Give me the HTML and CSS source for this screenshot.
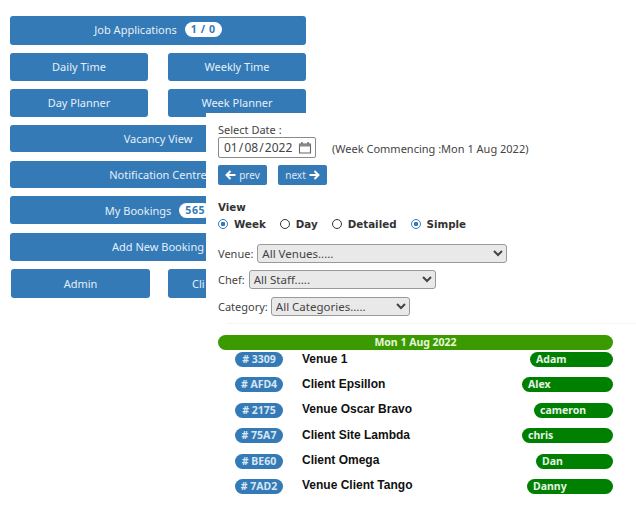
FILE: index.html
```html
<!DOCTYPE html>
<html lang="en">
<head>
    <meta charset="UTF-8">
    <meta name="viewport" content="width=device-width, initial-scale=1.0">
    <title>Planner</title>
    <link rel="stylesheet" href="styles.css">
</head>
<body>
    <!-- Main menu -->
    <div class="menu">
        <a class="btn btn-job">Job Applications <span class="count">1 / 0</span></a>
        <div class="pair">
            <a class="btn">Daily Time</a>
            <a class="btn">Weekly Time</a>
        </div>
        <div class="pair">
            <a class="btn">Day Planner</a>
            <a class="btn">Week Planner</a>
        </div>
        <a class="btn btn-wide">Vacancy View</a>
        <a class="btn btn-wide btn-notify">Notification Centre</a>
        <a class="btn btn-tall">My Bookings <span class="count">565</span></a>
        <a class="btn btn-add">Add New Booking</a>
        <div class="pair pair-last">
            <a class="btn btn-admin">Admin</a>
            <a class="btn btn-cut">Cli</a>
        </div>
    </div>

    <!-- Planner panel, sits over the menu -->
    <div class="panel">
        <div class="date-label">Select Date :</div>
        <div class="date-row">
            <div class="date-input">
                <span class="date-value">01 / 08 / 2022</span>
                <svg class="cal" width="14" height="13" viewBox="0 0 14 13"><path d="M1.5 3h11v9h-11z" fill="none" stroke="#666" stroke-width="1.1"/><path d="M4 1v2.5M10 1v2.5" stroke="#666" stroke-width="1.4"/><path d="M1.5 3h11v2.5h-11z" fill="#888"/></svg>
            </div>
            <span class="week-text">(Week Commencing :Mon 1 Aug 2022)</span>
        </div>
        <div class="nav-row">
            <a class="nav-btn">
                <svg width="11" height="10" viewBox="0 0 11 10"><path d="M10.5 5H2M5.5 1 1.5 5l4 4" fill="none" stroke="#fff" stroke-width="2"/></svg>
                prev
            </a>
            <a class="nav-btn">
                next
                <svg width="11" height="10" viewBox="0 0 11 10"><path d="M.5 5H9M5.5 1l4 4-4 4" fill="none" stroke="#fff" stroke-width="2"/></svg>
            </a>
        </div>

        <div class="view-title">View</div>
        <div class="view-row">
            <span class="opt"><span class="radio on"></span>Week</span>
            <span class="opt"><span class="radio"></span>Day</span>
            <span class="opt"><span class="radio"></span>Detailed</span>
            <span class="opt"><span class="radio on"></span>Simple</span>
        </div>

        <div class="filter">
            <label for="venue">Venue:</label>
            <select id="venue" class="sel-venue"><option>All Venues.....</option></select>
        </div>
        <div class="filter">
            <label for="chef">Chef:</label>
            <select id="chef" class="sel-chef"><option>All Staff.....</option></select>
        </div>
        <div class="filter filter-cat">
            <label for="category">Category:</label>
            <select id="category" class="sel-cat"><option>All Categories.....</option></select>
        </div>

        <div class="rule"></div>

        <div class="day-bar">Mon 1 Aug 2022</div>
        <div class="rows">
            <div class="row">
                <span class="ref">#&nbsp;3309</span>
                <span class="name">Venue 1</span>
                <span class="staff" style="width: 83px">Adam</span>
            </div>
            <div class="row">
                <span class="ref">#&nbsp;AFD4</span>
                <span class="name">Client Epsillon</span>
                <span class="staff" style="width: 91px">Alex</span>
            </div>
            <div class="row">
                <span class="ref">#&nbsp;2175</span>
                <span class="name">Venue Oscar Bravo</span>
                <span class="staff" style="width: 79px">cameron</span>
            </div>
            <div class="row">
                <span class="ref">#&nbsp;75A7</span>
                <span class="name">Client Site Lambda</span>
                <span class="staff" style="width: 91px">chris</span>
            </div>
            <div class="row">
                <span class="ref">#&nbsp;BE60</span>
                <span class="name">Client Omega</span>
                <span class="staff" style="width: 77px">Dan</span>
            </div>
            <div class="row">
                <span class="ref">#&nbsp;7AD2</span>
                <span class="name">Venue Client Tango</span>
                <span class="staff" style="width: 86px">Danny</span>
            </div>
        </div>
    </div>
</body>
</html>
```

FILE: styles.css
```css
html, body {
    height: 100%;
}

body {
    margin: 0;
    background: #fff;
    color: #444;
    font-family: "Noto Sans", sans-serif;
    font-size: 11px;
    overflow: hidden;
    position: relative;
}

.menu {
    width: 296px;
    padding: 16px 0 0 10px;
    display: flex;
    flex-direction: column;
    gap: 8px;
}

.btn {
    display: flex;
    align-items: center;
    justify-content: center;
    gap: 8px;
    height: 28px;
    box-sizing: border-box;
    padding-bottom: 2px;
    background: #337ab7;
    color: #e6eff7;
    border-radius: 3px;
}

.btn-job {
    height: 29px;
}

.btn-wide {
    height: 27px;
    padding-bottom: 0;
}

.btn-tall {
    padding-bottom: 0;
}

.btn-notify,
.btn-add {
    margin-top: 1px;
}

.pair {
    display: flex;
    justify-content: space-between;
}

.pair .btn {
    width: 138px;
}

.pair-last .btn {
    height: 29px;
    padding-bottom: 0;
}

.pair-last .btn-admin {
    width: 139px;
    margin-left: 1px;
}

/* only the start of this label shows beside the panel */
.pair-last .btn-cut {
    justify-content: flex-start;
    padding-left: 24px;
}

.count {
    background: #fff;
    color: #337ab7;
    border-radius: 9px;
    padding: 1px 6px;
    font-size: 10.5px;
    font-weight: 700;
    letter-spacing: 0.6px;
    line-height: 13px;
}

/* Panel */
.panel {
    position: absolute;
    left: 206px;
    top: 113px;
    right: 0;
    bottom: 0;
    background: #fff;
    padding: 9px 23px 0 12px;
}

.date-label {
    line-height: 15px;
}

.date-row {
    display: flex;
    align-items: center;
    gap: 16px;
}

.date-input {
    width: 98px;
    height: 21px;
    box-sizing: border-box;
    padding: 0 3px 0 5px;
    border: 1px solid #8a8a8a;
    border-radius: 2px;
    display: flex;
    align-items: center;
    justify-content: space-between;
}

.date-value {
    font-size: 12px;
    word-spacing: -2px;
    white-space: nowrap;
}

.week-text {
    padding-top: 1px;
}

.nav-row {
    display: flex;
    gap: 11px;
    margin-top: 7px;
}

.nav-btn {
    width: 49px;
    height: 20px;
    display: flex;
    align-items: center;
    justify-content: center;
    gap: 3px;
    background: #337ab7;
    color: #dfeaf4;
    border-radius: 2px;
    font-size: 10px;
}

.view-title,
.view-row {
    font-family: "DejaVu Sans", sans-serif;
    font-weight: 700;
    font-size: 10.3px;
    line-height: 14px;
    color: #333;
}

.view-title {
    margin-top: 15px;
}

.view-row {
    display: flex;
    gap: 14px;
    margin-top: 3px;
}

.opt {
    display: flex;
    align-items: center;
    gap: 6px;
}

.radio {
    width: 10px;
    height: 10px;
    box-sizing: border-box;
    border: 1.5px solid #333;
    border-radius: 50%;
    background: #fff;
}

.radio.on {
    border-color: #337ab7;
    background: radial-gradient(circle, #337ab7 0, #337ab7 2px, #fff 2.5px);
}

.filter {
    display: flex;
    align-items: center;
    gap: 4px;
    height: 19px;
    margin-top: 7px;
}

.view-row + .filter {
    margin-top: 13px;
}

.filter-cat {
    gap: 3px;
    margin-top: 8px;
}

.filter select {
    height: 19px;
    box-sizing: border-box;
    padding: 0;
    background: #e9e9e9;
    color: #444;
    border: 1px solid #999;
    border-radius: 3px;
    font-family: "Noto Sans", sans-serif;
    font-size: 11.5px;
}

.sel-venue {
    width: 250px;
}

.sel-chef {
    width: 187px;
}

.sel-cat {
    width: 139px;
}

.rule {
    height: 1px;
    margin: 7px -23px 0 9px;
    background: #f4f4f4;
}

.day-bar {
    margin-top: 11px;
    height: 15px;
    line-height: 15px;
    background: #3a9a00;
    color: #e8f5dc;
    border-radius: 8px;
    text-align: center;
    font-size: 10.5px;
    font-weight: 700;
}

.rows {
    display: flex;
    flex-direction: column;
    gap: 10.4px;
    margin-top: 2px;
    padding-left: 17px;
}

.row {
    display: flex;
    align-items: center;
    height: 15px;
}

.ref {
    width: 48px;
    height: 15px;
    line-height: 15px;
    background: #337ab7;
    color: #d8e6f2;
    border-radius: 8px;
    text-align: center;
    font-size: 10.5px;
    font-weight: 700;
}

.name {
    margin: -2px 0 0 19px;
    color: #111;
    font-family: "Liberation Sans", sans-serif;
    font-size: 12px;
    font-weight: 700;
}

.staff {
    margin-left: auto;
    height: 15px;
    line-height: 15px;
    box-sizing: border-box;
    padding-left: 6px;
    background: #008000;
    color: #e6f3e6;
    border-radius: 8px;
    font-size: 10.5px;
    font-weight: 700;
}
```
